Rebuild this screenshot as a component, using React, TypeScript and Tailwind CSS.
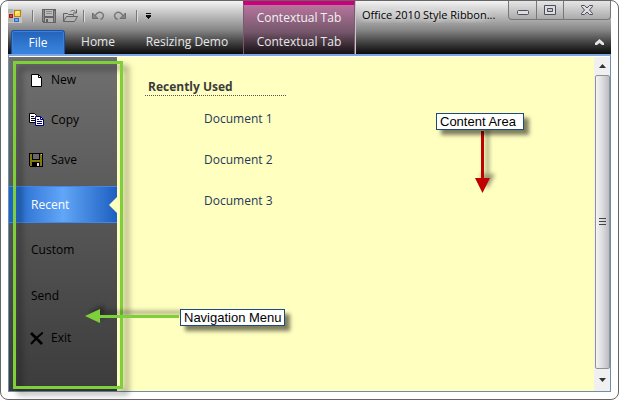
import type { ReactNode } from "react";

function FormIcon() {
  return (
    <svg width="14" height="14" viewBox="0 0 14 14">
      <path d="M0 0h14v14H0z" fill="#c4c4c4" />
      <path d="M0 0h5v4H0zM0 9h5v4H0z" fill="#b2b2b2" />
      <rect x="6.500" y="1.500" width="6" height="6" fill="#ffd34f" stroke="#b98200" />
      <path d="M7 4l2-2h2v1L8 5H7z" fill="#fff0a8" />
      <rect x="1.500" y="5.500" width="3" height="3" fill="#e8432d" stroke="#a31b10" />
      <rect x="6.500" y="9.500" width="4" height="3" fill="#69a8ff" stroke="#3467c9" />
    </svg>
  );
}

function DiskIcon() {
  return (
    <svg width="14" height="14" viewBox="0 0 14 14" shapeRendering="crispEdges">
      <path d="M0 0h14v14H1l-1-1z" fill="#646464" />
      <path d="M1 1h1v11H1zM12 2h1v11h-1z" fill="#8a8a8a" />
      <path d="M3 1h8v6H3z" fill="#bdbdbd" />
      <path d="M4 2.500h6M4 4.500h6" stroke="#8a8a8a" />
      <path d="M3 9h8v4H3z" fill="#b5b5b5" />
      <path d="M4 10h2v3H4z" fill="#606060" />
    </svg>
  );
}

function FolderIcon() {
  return (
    <svg width="17" height="14" viewBox="0 0 17 14" fill="none" stroke="#626262">
      <path d="M1.500 12.500v-8h4l1 1h5v2" />
      <path d="M1.500 12.500l3-5h11l-3 5z" fill="#b4b4b4" />
      <path d="M8.500 2.500c2-2 4-1 5.500 1M14.500 0.500v3.500h-3.500" />
    </svg>
  );
}

function UndoIcon({ flip = false }: { flip?: boolean }) {
  return (
    <svg width="13" height="10" viewBox="0 0 13 10" className={flip ? "-scale-x-100" : ""}>
      <path d="M0.500 2v5.500H6z" fill="#858585" stroke="#6d6d6d" />
      <path d="M3 5c2-4 5-4.500 7-3 2.500 2 1.500 5-1.500 6.500" fill="none" stroke="#777" strokeWidth="1.500" />
    </svg>
  );
}

function CustomizeIcon() {
  return (
    <svg width="5" height="6" viewBox="0 0 5 6" shapeRendering="crispEdges">
      <path d="M0 0h5v1H0zM0 2h5v2H4v1H3v1H2V5H1V4H0z" fill="#111" />
    </svg>
  );
}

function PageIcon() {
  return (
    <svg width="14" height="14" viewBox="0 0 14 14">
      <path d="M2.500 1.500h7l3 3v9h-10z" fill="#fff" stroke="#000" />
      <path d="M9.500 1.500v3h3" fill="none" stroke="#000" />
    </svg>
  );
}

function CopyIcon() {
  return (
    <svg width="16" height="14" viewBox="0 0 16 14">
      <path d="M0.500 0.500h5l2 2v7h-7z" fill="#fff" stroke="#000" />
      <path d="M2 3.500h3M2 5.500h4M2 7.500h4" stroke="#000" />
      <path d="M6.500 3.500h5l3 3v6h-8z" fill="#fff" stroke="#00007c" />
      <path d="M11.500 3.500v3h3M8 6.500h2M8 8.500h5M8 10.500h5" fill="none" stroke="#00007c" />
    </svg>
  );
}

function SaveIcon() {
  return (
    <svg width="14" height="14" viewBox="0 0 14 14" shapeRendering="crispEdges">
      <path d="M0 0h14v14H1l-1-1z" fill="#000" />
      <path d="M1 1h12v12H1z" fill="#7c7a12" />
      <path d="M3 0h8v7H3z" fill="#000" />
      <path d="M4 1h6v5H4z" fill="#686868" />
      <path d="M3 9h8v5H3z" fill="#000" />
      <path d="M8 10h2v3H8z" fill="#ddd" />
      <path d="M12 1h1v1h-1z" fill="#ccc" />
    </svg>
  );
}

function ExitIcon() {
  return (
    <svg width="14" height="13" viewBox="0 0 14 13" fill="none" stroke="#000">
      <path d="M2 1l4 4 7 7" strokeWidth="2.600" />
      <path d="M14 0.500L8 5.500l-6 6.500" strokeWidth="2" />
    </svg>
  );
}

function TabButton({ children, width }: { children: ReactNode; width: string }) {
  return (
    <button type="button" role="tab" aria-selected="false" className={`h-6 shrink-0 text-center text-[#e8e8e8] ${width}`}>
      {children}
    </button>
  );
}

function Separator() {
  return <span className="h-3 w-px bg-[#777] shadow-[1px_0_0_#ddd]" />;
}

function NavItem({ label, icon, height }: { label: string; icon?: ReactNode; height: string }) {
  return (
    <button type="button" className={`flex w-full items-center pl-5 text-left text-black ${height}`}>
      {icon && <span className="flex w-5 shrink-0 items-center">{icon}</span>}
      <span className="pl-0.5">{label}</span>
    </button>
  );
}

function Callout({ children, width }: { children: ReactNode; width: string }) {
  return (
    <div
      className={`border border-[#1f497d] bg-white pl-[3px] font-['Liberation_Sans',Arial,sans-serif] text-[13px] leading-[15px] whitespace-nowrap text-black shadow-[5px_5px_4px_rgba(0,0,0,0.5)] ${width}`}
    >
      {children}
    </div>
  );
}

const documents = ["Document 1", "Document 2", "Document 3"];

export default function App() {
  return (
    <div className="relative flex h-screen flex-col overflow-hidden rounded-lg border border-[#666] bg-white px-[7px] pb-[7px] font-['Open_Sans','Segoe_UI',sans-serif] text-[12px] leading-4">
      <header className="flex h-[53px] shrink-0 bg-linear-to-b from-[#f4f4f4] via-[#868686] via-55% to-[#0c0c0c]">
        <div className="flex w-[235px] shrink-0 flex-col justify-between">
          <div className="flex h-7 items-center pt-0.5">
            <FormIcon />
            <div className="flex items-center gap-[9px] pl-2.5">
              <Separator />
              <button type="button" aria-label="Save"><DiskIcon /></button>
            </div>
            <button type="button" aria-label="Open" className="ml-1.5"><FolderIcon /></button>
            <div className="ml-1 flex items-center gap-2">
              <Separator />
              <button type="button" aria-label="Undo"><UndoIcon /></button>
              <button type="button" aria-label="Redo"><UndoIcon flip /></button>
            </div>
            <div className="ml-2.5 flex items-center gap-[9px]">
              <Separator />
              <button type="button" aria-label="Customize toolbar"><CustomizeIcon /></button>
            </div>
          </div>
          <div role="tablist" className="flex items-end pl-[3px]">
            <button
              type="button"
              role="tab"
              aria-selected="true"
              className="h-6 w-[54px] shrink-0 rounded-t-[3px] border border-b-0 border-[#1b52a8] bg-linear-to-b from-[#2463b9] to-[#3a86e0] text-white shadow-[inset_0_0_0_1px_#3c80da]"
            >
              File
            </button>
            <TabButton width="w-[66px]">Home</TabButton>
            <TabButton width="w-[112px]">Resizing Demo</TabButton>
          </div>
        </div>
        <div className="flex w-28 shrink-0 flex-col items-center justify-between border-x border-t-4 border-x-[#7c5970] border-t-[#cc007a] bg-linear-to-b from-[#b8759e] via-[#75576b] via-55% to-[#171115] text-[#f2f2f2]">
          <span className="pt-[5px] whitespace-nowrap">Contextual Tab</span>
          <TabButton width="w-full">Contextual Tab</TabButton>
        </div>
        <div className="flex min-w-0 flex-1 flex-col justify-between border-l border-[#c8c8c8]">
          <div className="flex min-w-0 justify-between">
            <h1 className="truncate pt-1.5 pl-1.5 text-[11px] text-black [text-shadow:0_0_6px_#fff,0_0_8px_#fff]">Office 2010 Style Ribbon...</h1>
            <div className="flex h-[19px] w-[103px] shrink-0 divide-x divide-[#777] rounded-b-[4px] border border-t-0 border-[#777] bg-linear-to-b from-[#e6e6e6] to-[#aaa]">
              <button type="button" aria-label="Minimize" className="flex w-7 items-center justify-center">
                <svg width="12" height="12"><rect x="0.500" y="6.500" width="11" height="4" rx="1" fill="#ddd" stroke="#4c4c60" /></svg>
              </button>
              <button type="button" aria-label="Maximize" className="flex w-[27px] items-center justify-center">
                <svg width="12" height="10"><path d="M0.500 0.500h11v9H0.500zM3.500 3.500v3h5v-3z" fill="#ddd" fillRule="evenodd" stroke="#4c4c60" /></svg>
              </button>
              <button type="button" aria-label="Close" className="flex flex-1 items-center justify-center">
                <svg width="12" height="10"><path d="M0.500 0.500h3L6 3l2.500-2.500h3v1L8.500 5l3 3.500v1h-3L6 7 3.500 9.500h-3v-1L3.500 5l-3-3.500z" fill="#ddd" stroke="#4c4c60" /></svg>
              </button>
            </div>
          </div>
          <button type="button" aria-label="Collapse ribbon" className="flex h-6 w-6 items-center justify-center self-end">
            <svg width="9" height="7"><path d="M4.500 0L9 4v2H7L4.500 4 2 6H0V4z" fill="#e5e5e5" /></svg>
          </button>
        </div>
      </header>

      <div className="flex min-h-0 flex-1 border border-t-2 border-[#6f8fae] border-t-[#7ca6e0] bg-white pt-px">
        <nav aria-label="File menu" className="flex w-[108px] shrink-0 flex-col bg-linear-to-b from-[#707070] to-[#3c3c3c] pt-[3px]">
          <NavItem label="New" icon={<PageIcon />} height="h-10" />
          <NavItem label="Copy" icon={<CopyIcon />} height="h-10" />
          <NavItem label="Save" icon={<SaveIcon />} height="h-10" />
          <button
            type="button"
            aria-current="page"
            className="mt-1.5 flex h-[37px] items-center justify-between border-y border-[#3f87ec] bg-linear-to-r from-[#1c63c7] via-[#62a6f8] to-[#1c5fc0] pl-[22px] text-white"
          >
            Recent
            <svg width="8" height="16"><path d="M8 0v16L0 8z" fill="#ffffc0" /></svg>
          </button>
          <div className="pt-1">
            <NavItem label="Custom" height="h-[46px]" />
            <NavItem label="Send" height="h-[46px]" />
            <NavItem label="Exit" icon={<ExitIcon />} height="h-[38px]" />
          </div>
        </nav>
        <main className="min-w-0 flex-1 bg-[#ffffc0] pt-[22px] pl-7">
          <section className="w-[141px]">
            <h2 className="border-b border-dotted border-[#555] pl-[3px] font-bold whitespace-nowrap text-[#3b3b3b]">Recently Used</h2>
            <ul className="flex flex-col gap-[25px] pt-[15px] pl-[59px]">
              {documents.map((name) => (
                <li key={name}><a href="#" className="block whitespace-nowrap text-[#1e395b]">{name}</a></li>
              ))}
            </ul>
          </section>
        </main>
        <div className="flex w-4 shrink-0 flex-col items-center bg-[#f0f0f0]">
          <button type="button" aria-label="Scroll up" className="flex h-[18px] w-full items-center justify-center">
            <svg width="7" height="4"><path d="M3.500 0L7 4H0z" fill="#333" /></svg>
          </button>
          <div className="flex w-[15px] flex-1 items-center justify-center rounded-[2px] border border-[#929292] bg-linear-to-r from-[#f5f5f5] via-[#dcdce0] to-[#bbbbc1]">
            <svg width="7" height="8"><path d="M0 0.500h7M0 3.500h7M0 6.500h7" stroke="#444" /></svg>
          </div>
          <button type="button" aria-label="Scroll down" className="flex h-[22px] w-full items-center justify-center">
            <svg width="7" height="4"><path d="M0 0h7L3.500 4z" fill="#333" /></svg>
          </button>
        </div>
      </div>

      <div className="pointer-events-none absolute top-[60px] left-[12px] h-[328px] w-[110px] border-3 border-[#7ed03a] drop-shadow-[5px_5px_3px_rgba(0,0,0,0.5)]" />
      <svg className="pointer-events-none absolute top-[308px] left-[84px] drop-shadow-[4px_-4px_2px_rgba(0,0,0,0.4)]" width="96" height="15">
        <path d="M0 7L15 0v14z" fill="#7ed03a" />
        <path d="M14 7.500h80" stroke="#7ed03a" strokeWidth="3" />
      </svg>
      <div className="absolute top-[308px] left-[179px]"><Callout width="w-[105px]">Navigation Menu</Callout></div>
      <svg className="pointer-events-none absolute top-[130px] left-[474px] drop-shadow-[5px_-4px_2px_rgba(0,0,0,0.4)]" width="15" height="62">
        <path d="M7.500 0v48" stroke="#c00000" strokeWidth="3" />
        <path d="M0 47h15L7.500 62z" fill="#c00000" />
      </svg>
      <div className="absolute top-[112px] left-[435px]"><Callout width="w-22">Content Area</Callout></div>
    </div>
  );
}
